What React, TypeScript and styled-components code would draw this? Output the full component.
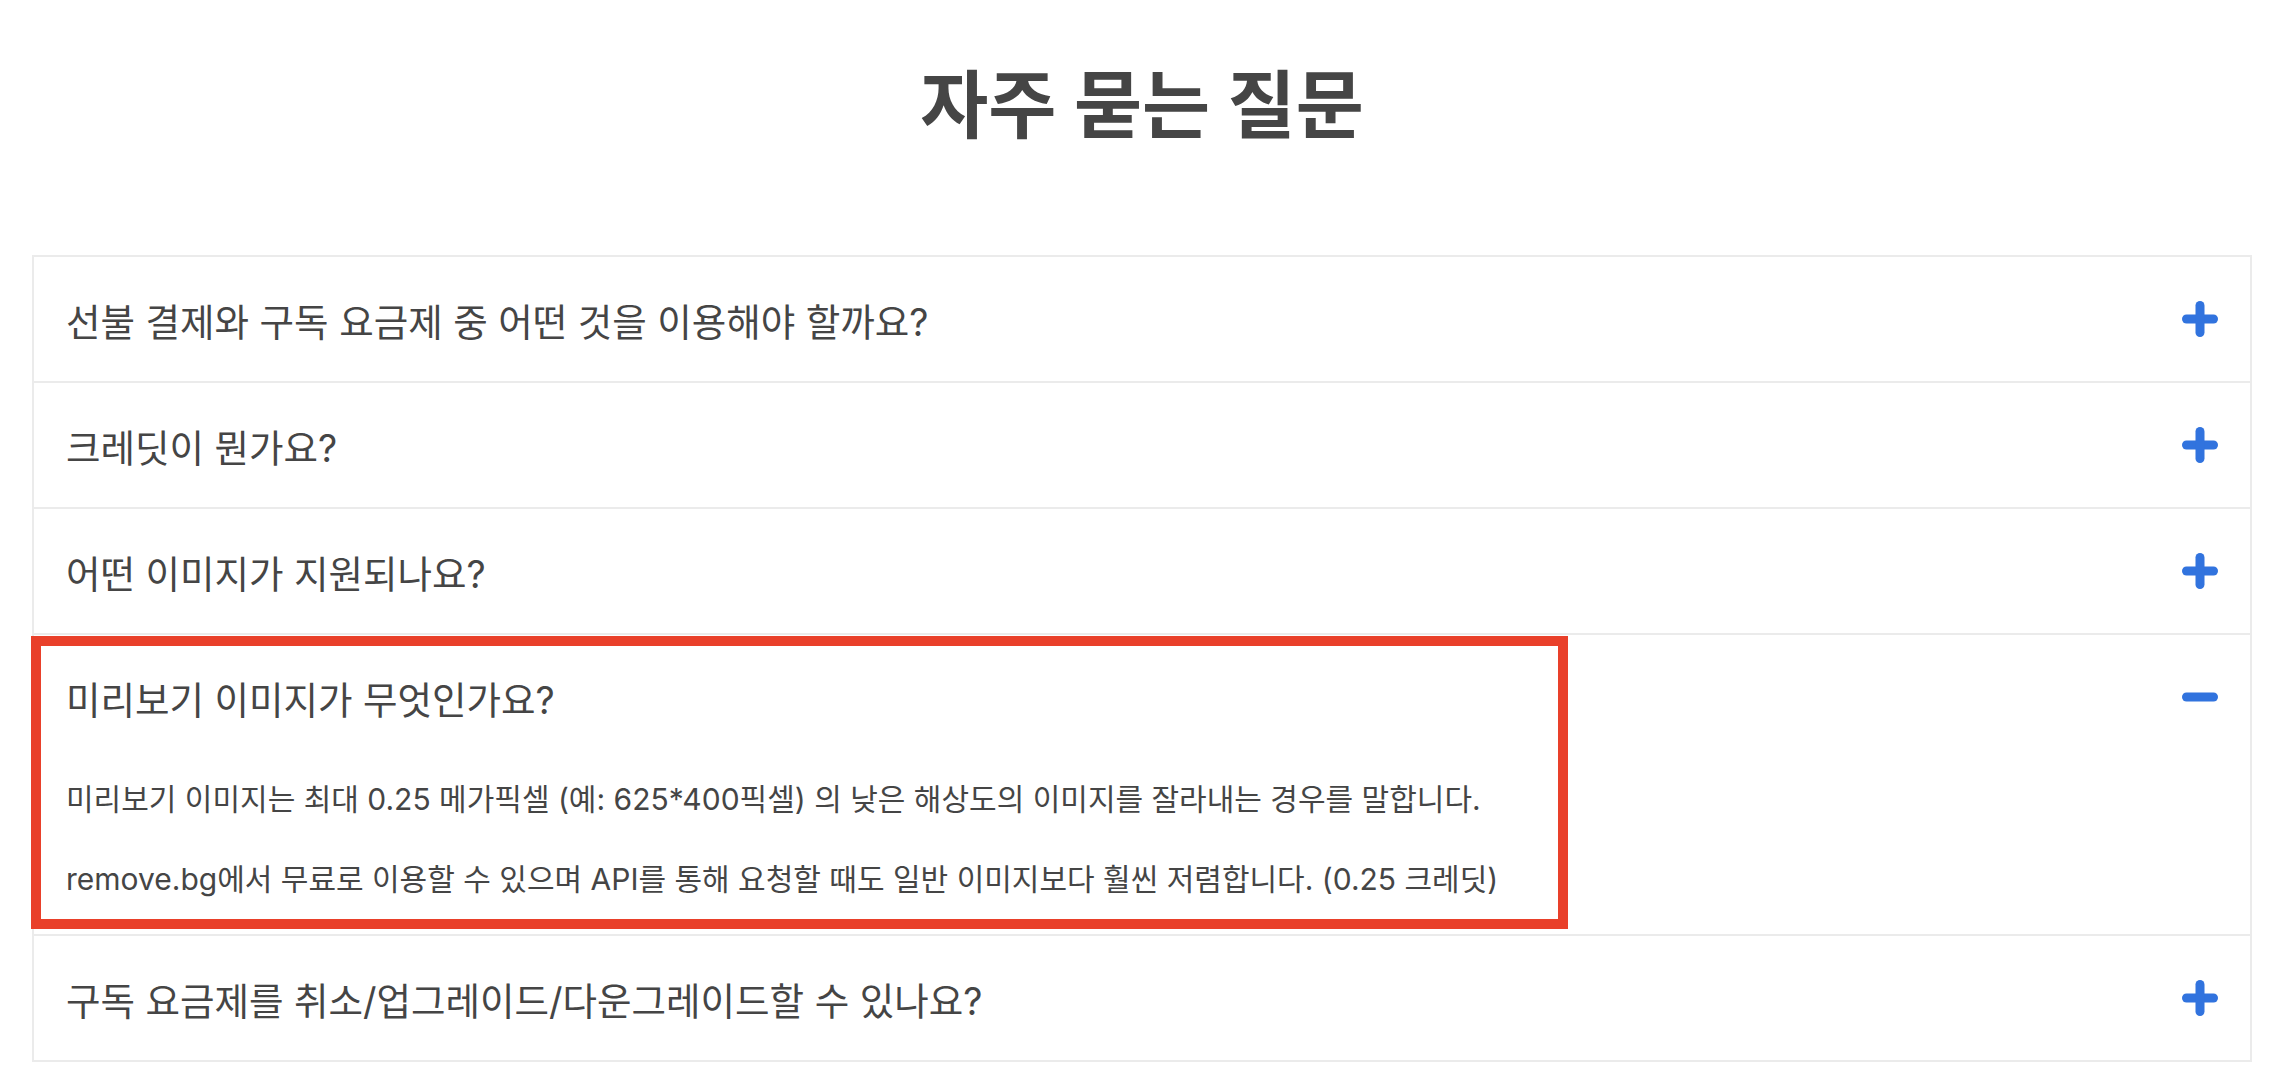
import { useState } from "react";
import styled, { createGlobalStyle } from "styled-components";

const GlobalStyle = createGlobalStyle`
  * {
    box-sizing: border-box;
  }
  body {
    margin: 0;
    background: #ffffff;
    font-family: "Inter", "Noto Sans CJK KR", "Noto Sans", sans-serif;
    color: #454545;
  }
`;

const faqs = [
  {
    question: "선불 결제와 구독 요금제 중 어떤 것을 이용해야 할까요?",
    answer: [],
  },
  { question: "크레딧이 뭔가요?", answer: [] },
  { question: "어떤 이미지가 지원되나요?", answer: [] },
  {
    question: "미리보기 이미지가 무엇인가요?",
    answer: [
      "미리보기 이미지는 최대 0.25 메가픽셀 (예: 625*400픽셀) 의 낮은 해상도의 이미지를 잘라내는 경우를 말합니다.",
      "remove.bg에서 무료로 이용할 수 있으며 API를 통해 요청할 때도 일반 이미지보다 훨씬 저렴합니다. (0.25 크레딧)",
    ],
  },
  { question: "구독 요금제를 취소/업그레이드/다운그레이드할 수 있나요?", answer: [] },
];

function ToggleIcon({ open }: { open: boolean }) {
  return (
    <svg width="36" height="36" viewBox="0 0 36 36">
      <line
        x1="4.5"
        y1="18"
        x2="31.5"
        y2="18"
        stroke="#3173de"
        strokeWidth="9"
        strokeLinecap="round"
      />
      {!open && (
        <line
          x1="18"
          y1="4.5"
          x2="18"
          y2="31.5"
          stroke="#3173de"
          strokeWidth="9"
          strokeLinecap="round"
        />
      )}
    </svg>
  );
}

export default function App() {
  const [openIndex, setOpenIndex] = useState<number | null>(3);

  const toggle = (i: number) => {
    setOpenIndex((cur) => (cur === i ? null : i));
  };

  return (
    <Page>
      <GlobalStyle />
      <Title>자주 묻는 질문</Title>
      <List>
        {faqs.map((faq, i) => {
          const open = openIndex === i;
          return (
            <Item key={faq.question}>
              <Header onClick={() => toggle(i)}>
                <Question>{faq.question}</Question>
                <ToggleIcon open={open} />
              </Header>
              {open && faq.answer.length > 0 && (
                <Answer>
                  {faq.answer.map((line) => (
                    <p key={line}>{line}</p>
                  ))}
                </Answer>
              )}
              {open && <Highlight />}
            </Item>
          );
        })}
      </List>
    </Page>
  );
}

const Page = styled.div`
  width: 100%;
  padding: 0 32px;
`;

const Title = styled.h1`
  margin: 0;
  padding: 58px 0 0;
  height: 255px;
  text-align: center;
  font-size: 74px;
  line-height: 94px;
  font-weight: 700;
  color: #454545;
  letter-spacing: 0;
`;

const List = styled.div`
  width: 2220px;
  border: 2px solid #ebebeb;
  border-bottom: none;
`;

const Item = styled.div`
  position: relative;
  border-bottom: 2px solid #ebebeb;
`;

const Header = styled.button`
  width: 100%;
  height: 124px;
  display: flex;
  align-items: center;
  justify-content: space-between;
  padding: 0 32px 0 32px;
  border: none;
  background: none;
  cursor: pointer;
  text-align: left;
  font: inherit;
  color: inherit;
`;

const Question = styled.span`
  font-size: 37.5px;
  font-weight: 400;
  color: #454545;
`;

const Answer = styled.div`
  padding: 18px 32px 33px;
  font-size: 30px;
  line-height: 44px;
  color: #454545;
  p {
    margin: 0 0 36px;
  }
  p:last-child {
    margin-bottom: 0;
  }
`;

const Highlight = styled.div`
  position: absolute;
  top: 1px;
  left: -3px;
  width: 1537px;
  height: 293px;
  border: 10px solid #e9402a;
  pointer-events: none;
`;
